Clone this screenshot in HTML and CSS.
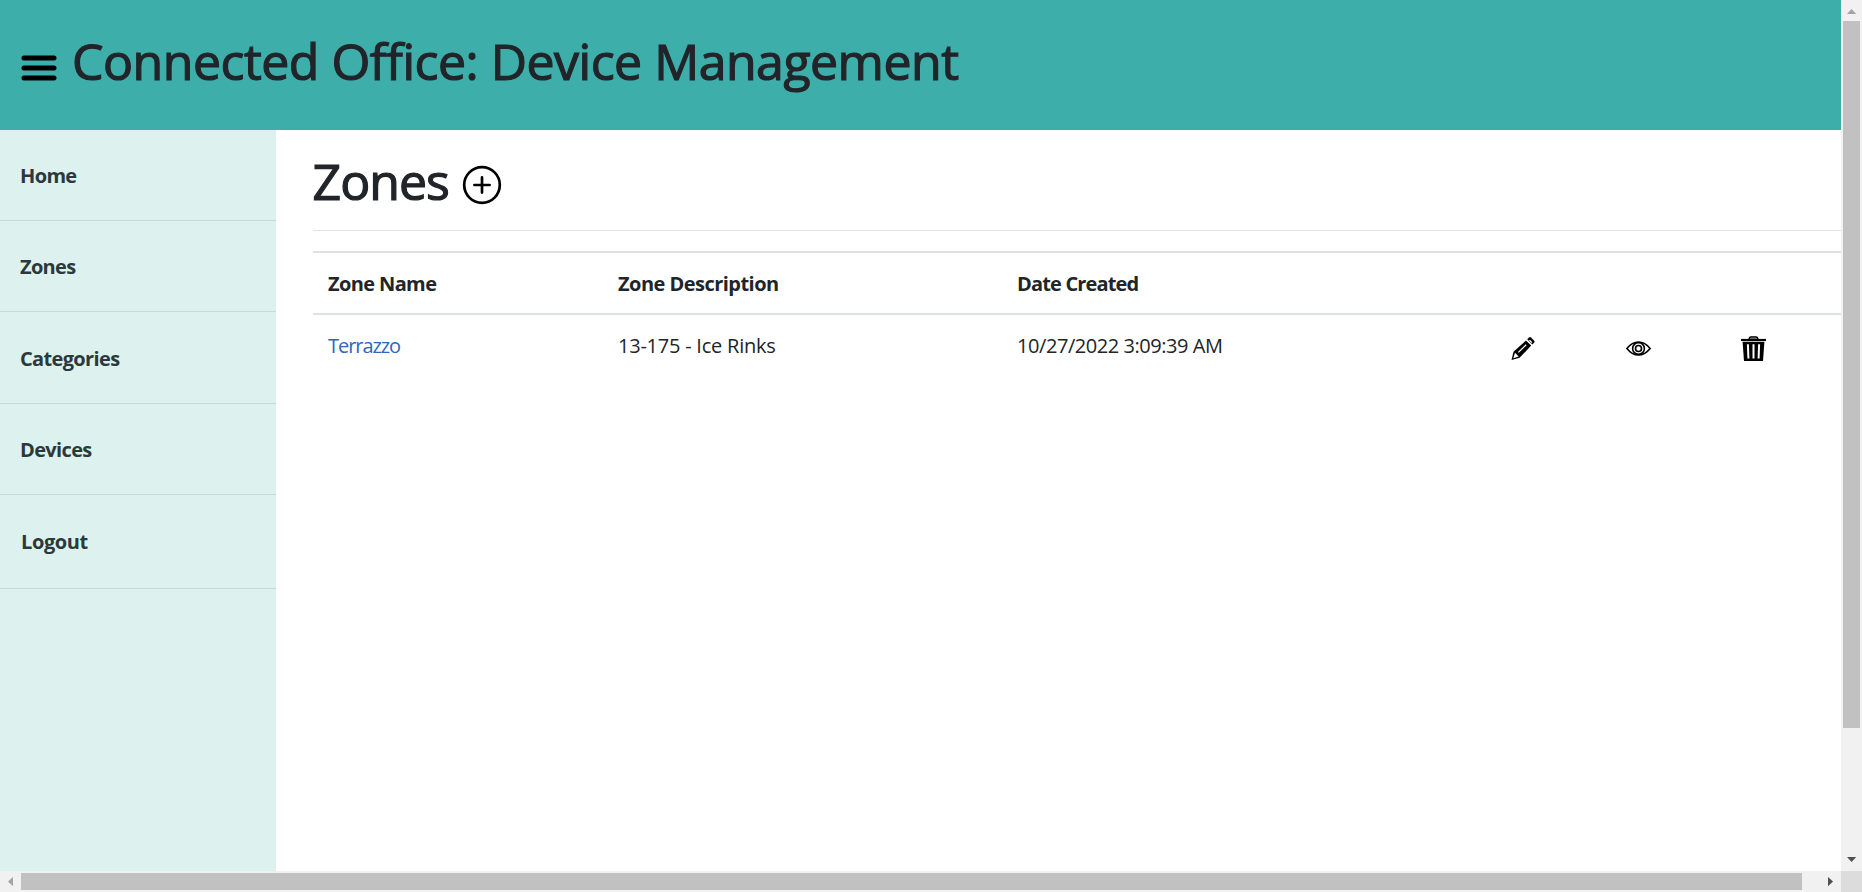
FILE: index.html
```html
<!DOCTYPE html>
<html lang="en">
<head>
<meta charset="utf-8">
<title>Zones - Connected Office</title>
<link rel="stylesheet" href="styles.css">
</head>
<body>
<div class="window">
  <div class="page">
    <header class="header">
      <svg class="menu-icon" width="36" height="28" viewBox="0 0 36 28" fill="none" stroke="#000" stroke-width="5" stroke-linecap="round"><path d="M3 4h30M3 14h30M3 24h30"/></svg>
      <h1 class="title">Connected Office: Device Management</h1>
    </header>
    <div class="body">
      <nav class="sidebar">
        <a class="nav-item">Home</a>
        <a class="nav-item nav-zones">Zones</a>
        <a class="nav-item nav-categories">Categories</a>
        <a class="nav-item">Devices</a>
        <a class="nav-item nav-logout">Logout</a>
      </nav>
      <main class="main">
        <div class="heading">
          <h1 class="heading-text">Zones</h1>
          <svg class="add-icon" width="40" height="40" viewBox="0 0 40 40" fill="none" stroke="#000" stroke-width="2.700" stroke-linecap="round"><circle cx="20" cy="20" r="17.8"/><path d="M12.4 20h15.2M20 12.4v15.2"/></svg>
        </div>
        <div class="rule"></div>
        <div class="table">
          <div class="row row-head">
            <span class="zone-name">Zone Name</span>
            <span class="zone-desc">Zone Description</span>
            <span class="zone-date">Date Created</span>
          </div>
          <div class="row">
            <a class="link">Terrazzo</a>
            <span class="desc">13-175 - Ice Rinks</span>
            <span class="date">10/27/2022 3:09:39 AM</span>
            <svg class="icon" width="25" height="25" viewBox="0 0 25 25"><path d="M.5 24l2-8.200L15 4.400l5.200 5.200L8.600 21.800z"/><path d="M16.200 3.300l1.900-1.900q.9-.8 1.800 0l3.300 3.300q.9.900 0 1.800l-1.900 1.900z"/><path d="M2.300 22.200l1.700-5.400 3.700 3.700z" fill="#fff"/><path d="M7.400 16.400l7.800-7.600M18.400 4.200l2.500 2.500" stroke="#fff" stroke-width="1.200"/></svg>
            <svg class="icon" width="25" height="25" viewBox="0 0 25 25" fill="none" stroke="#000" stroke-width="1.600"><path d="M.9 12.5Q6 6 12.5 6t11.600 6.500Q19 19 12.500 19T.9 12.500z"/><circle cx="12.5" cy="12.5" r="5.9"/><circle cx="12.5" cy="12.5" r="3"/></svg>
            <svg class="icon" width="25" height="25" viewBox="0 0 25 25"><path d="M7.8 3.600l.8-2q.4-.8 1.400-.8h5q1 0 1.400.8l.8 2" fill="#777" stroke="#000" stroke-width="1.300"/><path d="M0 2.900h25v2.100H0z"/><path d="M1.600 5.800h21.800L22 25H3z"/><path d="M6.900 8.200l.5 14.300M12.500 8.200v14.300M18.100 8.200l-.5 14.300" stroke="#fff" stroke-width="2"/></svg>
          </div>
        </div>
      </main>
    </div>
  </div>
  <div class="vscroll">
    <svg width="21" height="21" viewBox="0 0 21 21"><path d="M6 14l4.600-5 4.600 5z" fill="#a3a3a3"/></svg>
    <div class="vthumb"></div>
    <svg class="arrow-down" width="21" height="21" viewBox="0 0 21 21"><path d="M6 7l4.600 5 4.600-5z" fill="#505050"/></svg>
  </div>
  <div class="hscroll">
    <svg width="21" height="21" viewBox="0 0 21 21"><path d="M13 6l-5 4.600 5 4.600z" fill="#a3a3a3"/></svg>
    <div class="hthumb"></div>
    <svg class="arrow-right" width="21" height="21" viewBox="0 0 21 21"><path d="M8 6l5 4.600-5 4.600z" fill="#505050"/></svg>
  </div>
  <div class="corner"></div>
</div>
</body>
</html>
```
FILE: styles.css
```css
* { box-sizing: border-box; }
body {
  margin: 0;
  overflow: hidden;
  background: #fff;
  color: #212529;
  font-family: "Open Sans", "Noto Sans", sans-serif;
  font-size: 20px;
  line-height: 30px;
}
h1 {
  margin: 0;
  font-size: 50px;
  line-height: 60px;
  font-weight: 500;
  font-variant-ligatures: none;
  -webkit-text-stroke: 1.2px currentColor;
}
svg { display: block; flex: none; }

.window {
  display: grid;
  grid-template-columns: 1841px 21px;
  grid-template-rows: 871px 21px;
  width: 1862px;
  height: 892px;
}
.page { display: flex; flex-direction: column; overflow: hidden; }

.header {
  display: flex;
  flex: none;
  align-items: flex-start;
  height: 130px;
  padding: 31px 0 0 21px;
  background: #3daeaa;
}
.menu-icon { margin-top: 23px; }
.title { margin-left: 15px; letter-spacing: -0.5px; white-space: nowrap; }

.body { display: flex; flex: 1; }
.sidebar { width: 276px; background: #ddf2ee; }
.nav-item {
  display: flex;
  align-items: center;
  height: 91.25px;
  padding: 2px 0 0 20px;
  border-bottom: 1px solid #c7dcd9;
  color: #2b393c;
  font-weight: 700;
  letter-spacing: -0.65px;
}
.nav-zones { height: 91px; letter-spacing: -0.7px; }
.nav-categories { padding-top: 3px; }
.nav-logout { height: 94px; padding: 2px 0 0 21px; letter-spacing: -0.4px; }

.main { flex: 1; padding: 21px 0 0 36.5px; }
.heading { display: flex; height: 79px; }
.heading-text { letter-spacing: -0.97px; }
.add-icon { margin: 14px 0 0 13.5px; }
.rule { height: 1px; background: #e3e3e3; }

.table { margin-top: 20px; }
.row {
  display: grid;
  grid-template-columns: 290px 399px 494px 115px 115px 1fr;
  align-items: center;
  height: 62px;
  padding-left: 15.5px;
}
.row-head {
  height: 64px;
  padding-top: 2px;
  border-top: 2px solid #dee2e2;
  border-bottom: 2px solid #dee2e2;
  font-weight: 700;
}
.zone-name { letter-spacing: -0.62px; }
.zone-desc { letter-spacing: -0.53px; }
.zone-date { letter-spacing: -0.84px; }
.link { color: #2f65bd; letter-spacing: -1.05px; }
.desc { letter-spacing: -0.23px; }
.date { letter-spacing: -0.44px; }
.icon { margin-top: 5px; }

.vscroll { display: flex; flex-direction: column; background: #f1f1f1; }
.vthumb { width: 17px; height: 707px; margin-left: 2px; background: #c1c1c1; }
.arrow-down { margin-top: auto; }
.hscroll { display: flex; background: #f1f1f1; }
.hthumb { width: 1781px; height: 17px; margin-top: 2px; background: #c1c1c1; }
.arrow-right { margin-left: auto; }
.corner { background: #dcdcdc; }
```
